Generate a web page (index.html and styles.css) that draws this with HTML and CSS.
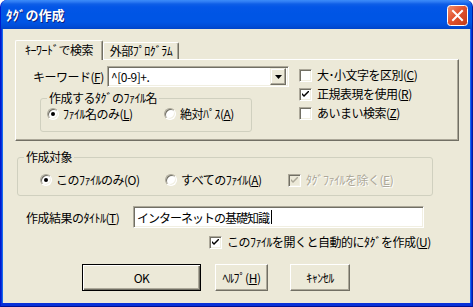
FILE: index.html
```html
<!DOCTYPE html>
<html lang="ja">
<head>
<meta charset="utf-8">
<link rel="stylesheet" href="styles.css">
</head>
<body>
<div class="window">
  <div class="titlebar">
    <span class="title">ﾀｸﾞの作成</span>
    <svg class="close" width="21" height="21" viewBox="0 0 21 21">
      <defs>
        <linearGradient id="cg" x1="0" y1="0" x2="1" y2="1">
          <stop offset="0" stop-color="#F0936F"/>
          <stop offset="0.45" stop-color="#E2532F"/>
          <stop offset="1" stop-color="#C23A17"/>
        </linearGradient>
      </defs>
      <rect x="0.5" y="0.5" width="20" height="20" rx="3" fill="url(#cg)" stroke="#fff"/>
      <path d="M6 6 L15 15 M15 6 L6 15" stroke="#fff" stroke-width="2" stroke-linecap="square"/>
    </svg>
  </div>
  <div class="client">
    <div class="tabctl">
      <div class="tabs">
        <div class="tab active">ｷｰﾜｰﾄﾞで検索</div>
        <div class="tab">外部ﾌﾟﾛｸﾞﾗﾑ</div>
      </div>
      <div class="panel">
        <div class="leftcol">
          <div class="kwrow">
            <span class="lbl">キーワード(<u>F</u>)</span>
            <div class="combo">
              <span class="combo-text">^[0-9]+.</span>
              <span class="dropbtn"><svg width="7" height="4" viewBox="0 0 7 4"><path d="M0 0H7L3.5 4Z" fill="#000"/></svg></span>
            </div>
          </div>
          <div class="group g1">
            <span class="group-title">作成するﾀｸﾞのﾌｧｲﾙ名</span>
            <div class="radiorow">
              <label class="opt r1"><span class="radio on"></span>ﾌｧｲﾙ名のみ(<u>L</u>)</label>
              <label class="opt r2"><span class="radio"></span>絶対ﾊﾟｽ(<u>A</u>)</label>
            </div>
          </div>
        </div>
        <div class="rightcol">
          <label class="opt"><span class="check"></span>大･小文字を区別(<u>C</u>)</label>
          <label class="opt"><span class="check"><svg width="7" height="7" viewBox="0 0 7 7"><path d="M0 2V4L2 6L7 1V-1L2 4Z" fill="#000"/></svg></span>正規表現を使用(<u>R</u>)</label>
          <label class="opt"><span class="check"></span>あいまい検索(<u>Z</u>)</label>
        </div>
      </div>
    </div>

    <div class="group g2">
      <span class="group-title">作成対象</span>
      <div class="radiorow">
        <label class="opt r3"><span class="radio on"></span>このﾌｧｲﾙのみ(O)</label>
        <label class="opt r4"><span class="radio"></span>すべてのﾌｧｲﾙ(<u>A</u>)</label>
        <label class="opt disabled"><span class="check dis"><svg width="7" height="7" viewBox="0 0 7 7"><path d="M0 2V4L2 6L7 1V-1L2 4Z" fill="#ACA899"/></svg></span>ﾀｸﾞﾌｧｲﾙを除く(<u>E</u>)</label>
      </div>
    </div>

    <div class="titlerow">
      <span class="lbl">作成結果のﾀｲﾄﾙ(<u>T</u>)</span>
      <div class="edit"><span>インターネットの基礎知識</span><span class="caret"></span></div>
    </div>

    <div class="autorow">
      <label class="opt"><span class="check"><svg width="7" height="7" viewBox="0 0 7 7"><path d="M0 2V4L2 6L7 1V-1L2 4Z" fill="#000"/></svg></span>このﾌｧｲﾙを開くと自動的にﾀｸﾞを作成(<u>U</u>)</label>
    </div>

    <div class="buttons">
      <div class="btn default"><span>OK</span></div>
      <div class="btn help"><span>ﾍﾙﾌﾟ(<u>H</u>)</span></div>
      <div class="btn cancel"><span>ｷｬﾝｾﾙ</span></div>
    </div>
  </div>
</div>
</body>
</html>
```

FILE: styles.css
```css
* { box-sizing: border-box; }
html, body { margin: 0; padding: 0; }
body {
  width: 473px;
  height: 307px;
  overflow: hidden;
  font-family: "Noto Sans CJK JP", "Liberation Sans", sans-serif;
  font-size: 12px;
  letter-spacing: -0.5px;
  color: #000;
}
u { text-decoration: underline; text-underline-offset: 1px; }

.window {
  width: 473px;
  height: 307px;
  display: flex;
  flex-direction: column;
  background: #0831D9;
  border-left: 1px solid #0019CF;
  border-right: 1px solid #001EA0;
  border-bottom: 1px solid #001090;
  border-radius: 7px 7px 0 0;
  overflow: hidden;
}

.titlebar {
  height: 29px;
  flex: none;
  display: flex;
  align-items: center;
  justify-content: space-between;
  padding: 0 4px 0 5px;
  background: linear-gradient(to bottom,
    #3C8CF9 0px, #2C79F2 2px, #0F5FE7 4px, #0356E7 7px, #0055E5 14px,
    #0055E5 22px, #004DD8 26px, #0044C9 29px);
}
.title {
  color: #fff;
  font-weight: bold;
  font-size: 13px;
  letter-spacing: 0;
  line-height: 16px;
  text-shadow: 1px 1px #0A1F80;
  padding-top: 1px;
}
.close { display: block; margin-top: 1px; }

.client {
  flex: 1;
  margin: 0 2px 3px 2px;
  background: #ECE9D8;
  display: flex;
  flex-direction: column;
  box-shadow: -1px 0 #166AEE, 1px 0 #166AEE;
}

.lbl { white-space: nowrap; }

/* Tab control */
.tabctl {
  margin: 11px 0 0 12px;
  width: 444px;
  display: flex;
  flex-direction: column;
}
.tabs {
  height: 19px;
  display: flex;
  align-items: flex-end;
  position: relative;
  z-index: 1;
}
.tab {
  height: 17px;
  padding: 0 4px;
  line-height: 15px;
  border: 1px solid;
  border-color: #fff #716F64 transparent #fff;
  border-bottom: none;
  border-radius: 2px 2px 0 0;
  box-shadow: inset -1px 0 #ACA899;
  background: #ECE9D8;
  white-space: nowrap;
  text-align: center;
}
.tab.active {
  width: 88px;
  height: 20px;
  margin-bottom: -1px;
  line-height: 18px;
}
.tab:not(.active) { width: 76px; }

.panel {
  height: 82px;
  border: 1px solid;
  border-color: #fff #716F64 #716F64 #fff;
  box-shadow: inset -1px -1px #ACA899;
  display: flex;
  padding: 6px 0 0 17px;
}
.leftcol { width: 266px; display: flex; flex-direction: column; }
.kwrow { display: flex; align-items: center; height: 21px; }
.kwrow .lbl { width: 74px; }
.combo {
  width: 182px;
  height: 21px;
  background: #fff;
  border: 1px solid;
  border-color: #ACA899 #fff #fff #ACA899;
  box-shadow: inset 1px 1px #716F64, inset -1px -1px #F1EFE2;
  display: flex;
  align-items: center;
  justify-content: space-between;
  padding: 2px 2px 2px 3px;
}
.combo-text { line-height: 14px; }
.dropbtn {
  width: 16px;
  height: 17px;
  background: #ECE9D8;
  border: 1px solid;
  border-color: #F1EFE2 #716F64 #716F64 #F1EFE2;
  box-shadow: inset -1px -1px #ACA899, inset 1px 1px #fff;
  display: flex;
  align-items: center;
  justify-content: center;
}
.dropbtn svg { display: block; margin-top: 1px; }

.group {
  border: 1px solid #D0D0BF;
  border-radius: 3px;
  display: flex;
  flex-direction: column;
}
.group-title {
  align-self: flex-start;
  margin: -8px 0 0 6px;
  padding: 0 2px;
  line-height: 14px;
  background: #ECE9D8;
  white-space: nowrap;
}
.g1 {
  margin: 11px 0 0 7px;
  width: 212px;
  height: 34px;
}
.g1 .radiorow { padding: 2px 0 0 6px; }
.radiorow { display: flex; align-items: center; }
.opt {
  display: flex;
  align-items: center;
  line-height: 14px;
  white-space: nowrap;
}
.r1 { width: 117px; }

.radio {
  width: 12px;
  height: 12px;
  flex: none;
  border-radius: 50%;
  background: #fff;
  border: 1px solid;
  border-color: #ACA899 #fff #fff #ACA899;
  box-shadow: inset 1px 1px #716F64, inset -1px -1px #F1EFE2;
  margin-right: 4px;
  display: flex;
  align-items: center;
  justify-content: center;
}
.radio.on::after {
  content: "";
  width: 4px;
  height: 4px;
  border-radius: 50%;
  background: #000;
}

.check {
  width: 13px;
  height: 13px;
  flex: none;
  background: #fff;
  border: 1px solid;
  border-color: #ACA899 #fff #fff #ACA899;
  box-shadow: inset 1px 1px #716F64, inset -1px -1px #F1EFE2;
  margin-right: 5px;
  display: flex;
  align-items: center;
  justify-content: center;
}
.check svg { display: block; }
.check.dis { background: #ECE9D8; }

.rightcol {
  display: flex;
  flex-direction: column;
  gap: 5px;
  padding: 2px 0 0 0;
}

/* group 2 */
.g2 {
  margin: 16px 0 0 14px;
  width: 416px;
  height: 39px;
}
.g2 .radiorow { padding: 9px 0 0 22px; }
.r3 { width: 125px; }
.r4 { width: 123px; }
.disabled { color: #ACA899; text-shadow: 1px 1px #fff; }

.titlerow {
  margin: 10px 0 0 23px;
  display: flex;
  align-items: center;
}
.titlerow .lbl { width: 107px; }
.edit {
  width: 291px;
  height: 22px;
  background: #fff;
  border: 1px solid;
  border-color: #ACA899 #fff #fff #ACA899;
  box-shadow: inset 1px 1px #716F64, inset -1px -1px #F1EFE2;
  display: flex;
  align-items: center;
  padding: 0 3px;
  font-size: 12px;
  letter-spacing: -1px;
}
.caret { width: 1px; height: 14px; background: #000; margin-left: 2px; }

.autorow {
  margin: 7px 0 0 206px;
}

.buttons {
  margin: 15px 0 0 79px;
  display: flex;
}
.btn {
  height: 27px;
  background: #ECE9D8;
  border: 1px solid;
  border-color: #fff #716F64 #716F64 #fff;
  box-shadow: inset -1px -1px #ACA899;
  display: flex;
  align-items: center;
  justify-content: center;
  line-height: 14px;
}
.btn.default {
  width: 119px;
  border: 1px solid #000;
  box-shadow: inset 1px 1px #fff, inset -1px -1px #716F64, inset -2px -2px #ACA899;
}
.btn.help { width: 53px; margin-left: 14px; }
.btn.cancel { width: 60px; margin-left: 22px; }
```
